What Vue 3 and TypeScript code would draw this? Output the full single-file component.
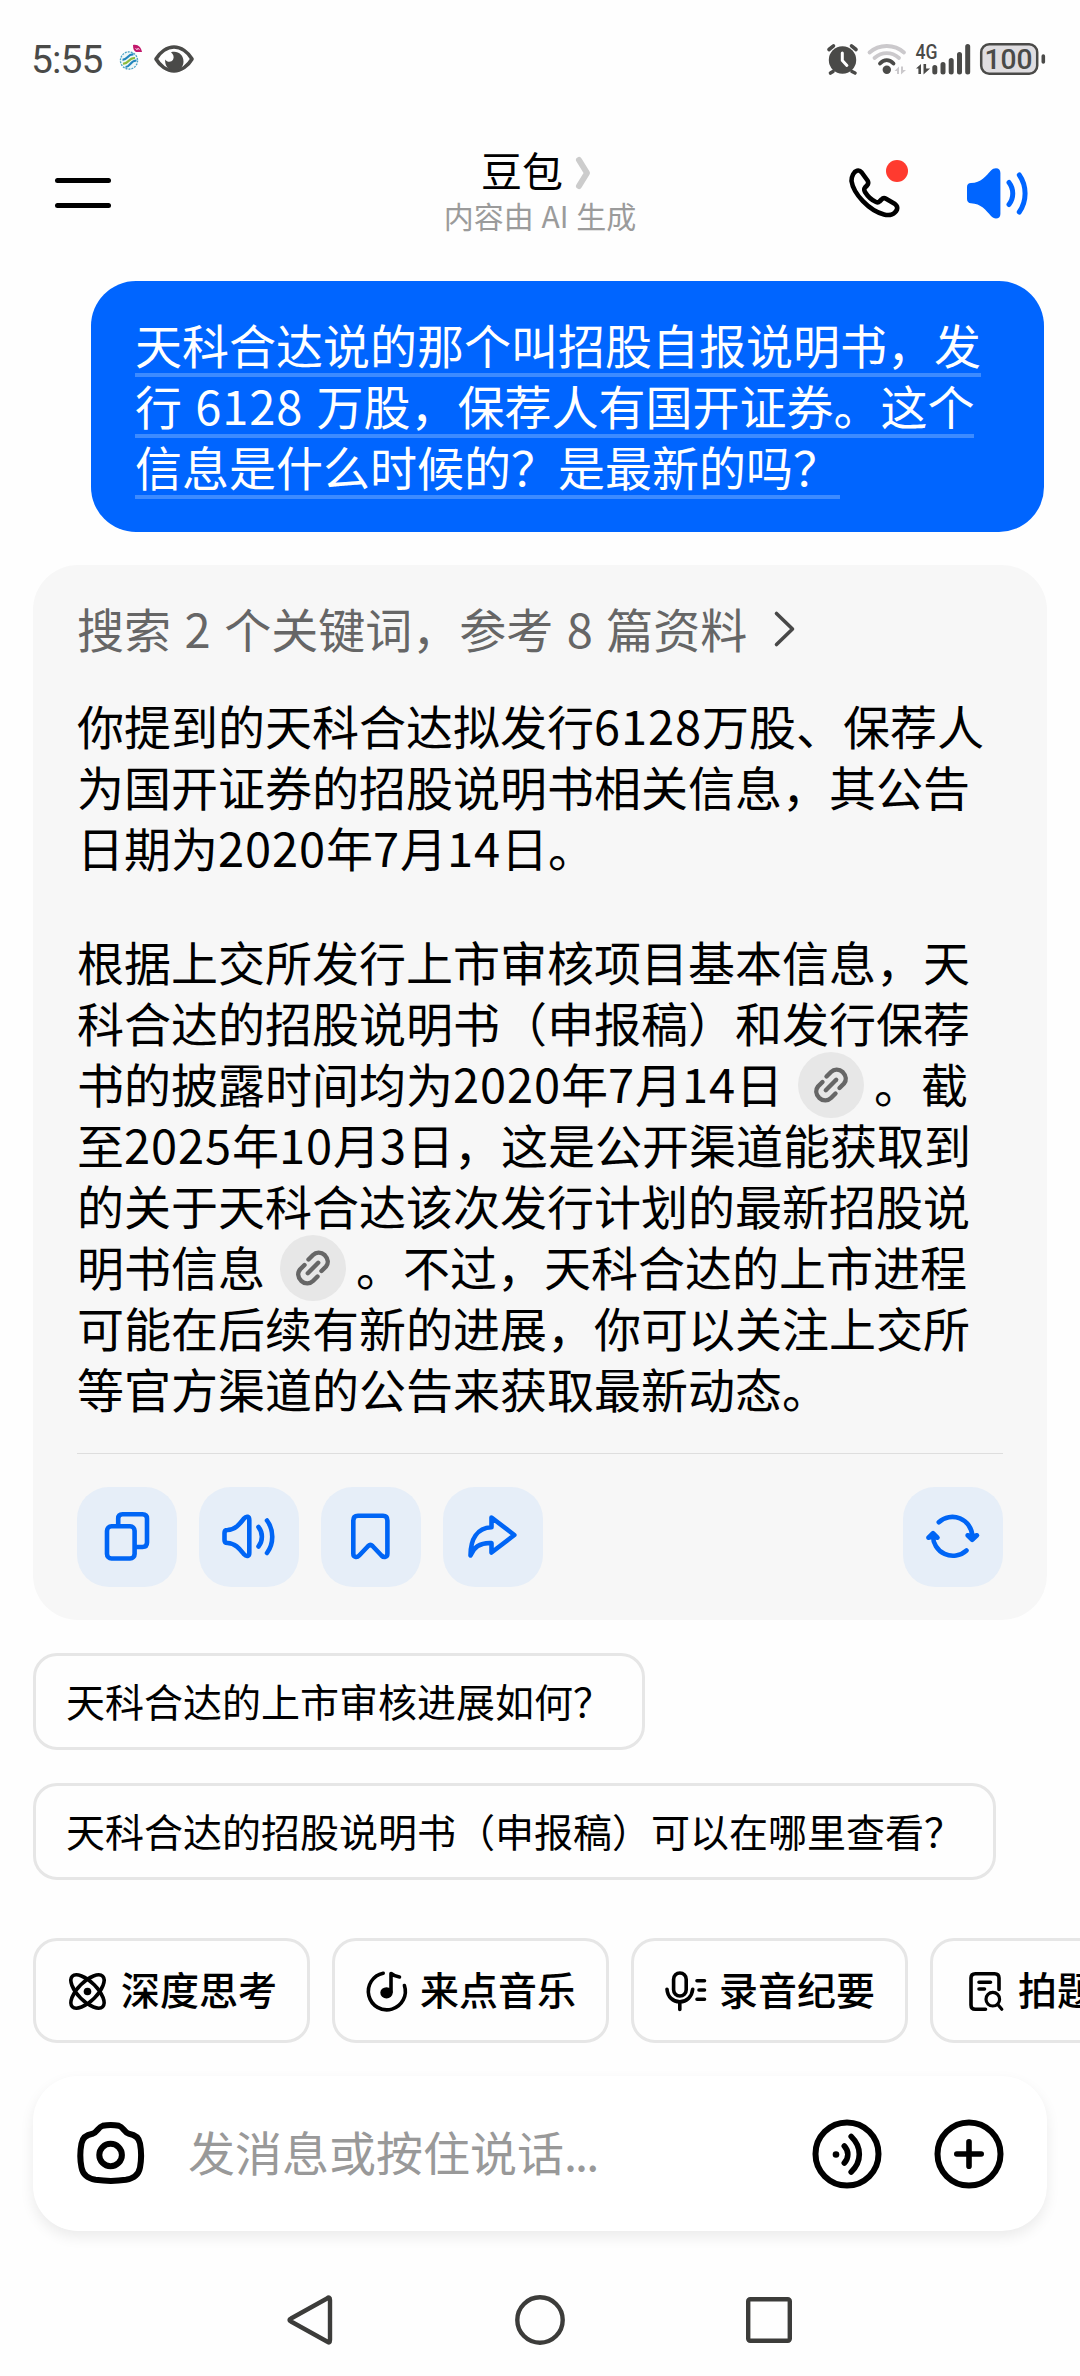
<script setup lang="ts">
interface Segment {
  text?: string
  link?: boolean
}

const question: string[] = [
  '天科合达说的那个叫招股自报说明书，发',
  '行 6128 万股，保荐人有国开证券。这个',
  '信息是什么时候的？是最新的吗？',
]

const paragraphs: Segment[][][] = [
  [
    [{ text: '你提到的天科合达拟发行6128万股、保荐人' }],
    [{ text: '为国开证券的招股说明书相关信息，其公告' }],
    [{ text: '日期为2020年7月14日。' }],
  ],
  [
    [{ text: '根据上交所发行上市审核项目基本信息，天' }],
    [{ text: '科合达的招股说明书（申报稿）和发行保荐' }],
    [{ text: '书的披露时间均为2020年7月14日' }, { link: true }, { text: '。截' }],
    [{ text: '至2025年10月3日，这是公开渠道能获取到' }],
    [{ text: '的关于天科合达该次发行计划的最新招股说' }],
    [{ text: '明书信息' }, { link: true }, { text: '。不过，天科合达的上市进程' }],
    [{ text: '可能在后续有新的进展，你可以关注上交所' }],
    [{ text: '等官方渠道的公告来获取最新动态。' }],
  ],
]

const suggestions: string[] = [
  '天科合达的上市审核进展如何？',
  '天科合达的招股说明书（申报稿）可以在哪里查看？',
]

const tools = [
  { id: 'think', label: '深度思考' },
  { id: 'music', label: '来点音乐' },
  { id: 'record', label: '录音纪要' },
  { id: 'photo', label: '拍题答疑' },
]

/* Splits a line into runs so that digits can carry their own tracking. */
function runs(text: string): string[] {
  return text.split(/(\d+)/).filter(Boolean)
}
function isNumber(run: string): boolean {
  return /^\d+$/.test(run)
}
</script>

<template>
  <div class="screen">
    <div class="status">
      <div class="status-side">
        <span class="time">5:55</span>
        <svg class="carrier" width="24" height="26" viewBox="0 0 24 26" fill="none">
          <circle cx="10" cy="16.500" r="8.600" fill="#eef7f8" stroke="#4aa3c4" stroke-width="1.300" stroke-dasharray="2 1" />
          <path d="M3.500 15.500c4.500 1 5.500-6 11-5M6.500 23c5 0 4.500-6.500 11-6.500" stroke="#2185bd" stroke-width="2.200" />
          <path d="M4 19.500c6 1 5-6 12-5.500" stroke="#8dbb3c" stroke-width="2.200" />
          <path d="M14 1c5-1 8 2 9 7h-6c-2-1-3-3-3-7z" fill="#c2186b" />
          <path d="M16.500 4l1.500 2 1-2 1.500 2" stroke="#f3b5d3" stroke-width="1" />
        </svg>
        <svg class="eye" width="40" height="28" viewBox="0 0 40 28">
          <path d="M2 14C6 7 13 2 20 2s14 5 18 12c-4 7-11 12-18 12S6 21 2 14z" fill="none" stroke="#4a4a48" stroke-width="3.600" stroke-linejoin="round" />
          <path d="M17 7.300c6.500-2 12.500 2.200 12.500 9.200 0 5.500-4 9-9.300 9-5.500 0-9.700-4.500-9-11 1.800 3 6.300 3 7.800.300 1.400-2.600.500-5.500-2-7.500z" fill="#4a4a48" />
        </svg>
      </div>
      <svg class="status-icons" width="220" height="34" viewBox="826 42 220 34">
        <g fill="#4a4a48" stroke-linecap="round">
          <circle cx="842.500" cy="60" r="13.700" />
          <path d="M829 49.500l4.500-3.700M856 49.500l-4.500-3.700M833 71.500l-2.500 1.500M852 71.500l3 1.500" stroke="#4a4a48" stroke-width="3.600" />
          <path d="M842.300 53v7.500l4.600 5" fill="none" stroke="#fff" stroke-width="3" />
        </g>
        <g fill="none" stroke-linecap="round" stroke-width="3.800">
          <path d="M869.500 52.500C879 43.800 894.500 43.800 904 52.500" stroke="#cbc9cc" />
          <path d="M874.500 58C882 51.500 891.500 51.500 899 58" stroke="#cbc9cc" />
          <path d="M880 63.500C884 59 889.500 59 893.500 63.500" stroke="#4a4a48" />
        </g>
        <circle cx="886.800" cy="69.800" r="4.200" fill="#4a4a48" />
        <path d="M894.500 71l4.500-4.500V74h-2v-3zM901 66.500h2v3.500h3l-5 4.500z" fill="#cbc9cc" />
        <text x="915.500" y="58.500" font-size="19.500" font-weight="500" fill="#4a4a48" textLength="22" lengthAdjust="spacingAndGlyphs">4G</text>
        <path d="M916 68.500l5-4.500v10h-2.600v-5.500zM923.500 64h2.600v4.500h4l-6.600 6z" fill="#4a4a48" />
        <path d="M934.800 67.500v4.500M943 64.500v7.500M951.200 60.500v11.500M959.500 54.500v17.500M967.700 46.500v25.500" stroke="#4a4a48" stroke-width="5" stroke-linecap="round" />
        <rect x="981.200" y="44.200" width="56" height="29.600" rx="8" fill="#dfdde0" stroke="#4a4a48" stroke-width="2.500" />
        <path d="M1043.300 56v6" stroke="#4a4a48" stroke-width="3.600" stroke-linecap="round" />
        <text x="984.500" y="69" font-size="28" font-weight="500" fill="#4a4a48" textLength="48" lengthAdjust="spacingAndGlyphs">100</text>
      </svg>
    </div>

    <header class="header">
      <div class="menu"><i></i><i></i></div>
      <div class="title-block">
        <div class="title">
          <span>豆包</span>
          <svg width="16" height="34" viewBox="0 0 16 34" fill="none">
            <path d="M4 4L12 17L4 30" stroke="#ccc" stroke-width="6" stroke-linecap="round" stroke-linejoin="round" />
          </svg>
        </div>
        <div class="subtitle">内容由 AI 生成</div>
      </div>
      <div class="header-actions">
        <div class="call">
          <svg width="52" height="50" viewBox="0 0 52 50" fill="none">
            <path d="M2.500 13C2.500 8 5 3.500 8 2.700C10 2 11.500 3 12.700 4.500L18.500 12.500C19.800 14.500 19.500 16 18 17.500L16 19.500C14.800 20.800 15 22 16 24C18.500 28 22.500 32 27 34C28.500 34.700 29.500 34.600 30.500 33.500L32.500 31.500C33.800 30 35.500 29.800 37 30.700L46 36C48 37.500 48.700 39 48 41.500C46 46 41 48 35 46.500C20 42.500 4.500 26 2.500 13Z" stroke="#000" stroke-width="4.600" stroke-linejoin="round" />
          </svg>
          <b class="dot"></b>
        </div>
        <svg width="64" height="53" viewBox="0 0 64 53" fill="none">
          <path d="M1 20C1 17.500 2.500 16 5 16C15 15.800 20 9 25 3.500C26.500 2 28 1.300 30 1.300C32.800 1.300 34.400 3 34.400 6V47C34.400 50 32.500 51.500 30 51.500C28 51.500 26.500 50.500 25 49C20 43.500 15 36.500 5 36.300C2.500 36.300 1 34.500 1 32Z" fill="#0065ff" />
          <path d="M43 15.500C48 22 48 31 43 37.500M53.300 8C61 19 61 34 53.300 45" stroke="#0065ff" stroke-width="5" stroke-linecap="round" />
        </svg>
      </div>
    </header>

    <main class="chat">
      <div class="bubble">
        <div v-for="line in question" :key="line" class="ask-line">
          <span class="ask-text"><span v-for="(run, r) in runs(line)" :key="r" :class="{ num: isNumber(run) }">{{ run }}</span></span>
        </div>
      </div>

      <section class="card">
        <div class="search">
          <span>搜索 2 个关键词，参考 8 篇资料</span>
          <svg width="22" height="36" viewBox="0 0 22 36" fill="none">
            <path d="M2.500 2.500L18.500 18L2.500 33.500" stroke="#484848" stroke-width="3.600" stroke-linecap="round" stroke-linejoin="round" />
          </svg>
        </div>

        <div v-for="(para, p) in paragraphs" :key="p" class="para">
          <div v-for="(line, l) in para" :key="l" class="line">
            <template v-for="(seg, s) in line" :key="s">
              <span v-if="seg.link" class="link">
                <svg width="66" height="66" viewBox="0 0 66 66" fill="none" stroke="#666" stroke-width="4.400" stroke-linecap="round">
                  <path d="M28.500 24.500L33 20C36 17 41 16.500 44.800 20.200C48.500 24 48.500 28.500 46 31.500L41.500 36" />
                  <path d="M37.500 41.500L33 46C30 49 25 49.500 21.200 45.800C17.500 42 17.500 37.500 20 34.500L24.500 30" />
                  <path d="M27.800 38.200L38.200 27.800" />
                </svg>
              </span>
              <template v-else>
                <span v-for="(run, r) in runs(seg.text ?? '')" :key="r" :class="{ num: isNumber(run) }">{{ run }}</span>
              </template>
            </template>
          </div>
        </div>

        <div class="divider"></div>

        <div class="actions">
          <div class="action">
            <svg viewBox="0 0 100 100">
              <rect x="30" y="39.300" width="27.600" height="32.200" rx="4.500" />
              <path d="M41.200 38V31.500Q41.200 27.200 45.500 27.200H65.500Q70 27.200 70 31.500V55.500Q70 60 65.500 60H59" />
            </svg>
          </div>
          <div class="action">
            <svg viewBox="0 0 100 100">
              <path d="M25.500 46Q25.500 43 28.500 43C37 42.500 41 36.500 45 31.500C47.500 28.500 50.300 29.500 50.300 33V66C50.300 69.300 47.500 70 45 67.300C41 62.500 37 56.500 28.500 56Q25.500 56 25.500 53Z" />
              <path d="M59.500 40C64 45.500 64 54 59.500 59.500M68 33.500C75 43 75 56.500 68 66" />
            </svg>
          </div>
          <div class="action">
            <svg viewBox="0 0 100 100">
              <path d="M32.300 33.500Q32.300 28.800 37 28.800H62Q66.400 28.800 66.400 33.500V66.500C66.400 70.300 63 71 60.500 68.500L51.500 59Q49.400 57 47.200 59L38.200 68.500C35.800 71 32.300 70.300 32.300 66.500Z" />
            </svg>
          </div>
          <div class="action">
            <svg viewBox="0 0 100 100">
              <path d="M48.500 30.500L71.300 48L48.500 65.500V56C39 55.500 31 59 27.500 68.500C27.500 52 34 41 48.500 40.300Z" />
            </svg>
          </div>
          <div class="action refresh">
            <svg viewBox="0 0 100 100">
              <path d="M35.800 35.200A20 20 0 0 1 69.300 49M30 48A20 20 0 0 0 63.500 63.500" />
              <path d="M64.600 48.300L69.200 52.800L74 48.300L69.200 49.500ZM25.400 50.700L30 46.200L34.500 50.700L30 49.500Z" fill="#0065f5" />
            </svg>
          </div>
        </div>
      </section>

      <div v-for="item in suggestions" :key="item" class="suggestion">{{ item }}</div>
    </main>

    <div class="tools">
      <div v-for="tool in tools" :key="tool.id" class="tool">
        <svg width="42" height="42" viewBox="0 0 42 42" fill="none" stroke="#000" stroke-width="3.600" stroke-linecap="round">
          <template v-if="tool.id === 'think'">
            <ellipse cx="20.500" cy="21.500" rx="21.500" ry="9.500" transform="rotate(45 20.500 21.500)" />
            <ellipse cx="20.500" cy="21.500" rx="21.500" ry="9.500" transform="rotate(-45 20.500 21.500)" />
            <circle cx="20.500" cy="21.500" r="3.800" fill="#000" stroke="none" />
          </template>
          <template v-else-if="tool.id === 'music'">
            <path d="M17.200 3.200A18.500 18.500 0 1 0 38.400 15.500" />
            <path d="M25 22V3.500Q28 6 33.500 7" stroke-linejoin="round" />
            <ellipse cx="20.500" cy="22.800" rx="6.200" ry="5.600" fill="#000" stroke="none" />
          </template>
          <template v-else-if="tool.id === 'record'">
            <rect x="8.600" y="3" width="12.600" height="23" rx="6.300" />
            <path d="M2 19.200C2.500 27 8 31.800 14.800 31.800S27 27 27.700 19.200M14.800 32.500V39.500M32 10.700H39.500M34 20H39.500M32 29.200H39.500" />
          </template>
          <template v-else>
            <path d="M35 19.500V8Q35 3.700 30.700 3.700H11.300Q7 3.700 7 8V35Q7 39.300 11.300 39.300H21.500M15 12.200H26.500M15 19H20.500" />
            <circle cx="28.800" cy="29.200" r="6.800" stroke-width="3.200" />
            <path d="M33.800 34.500L37.800 39.200" stroke-width="3.200" />
          </template>
        </svg>
        <span>{{ tool.label }}</span>
      </div>
    </div>

    <div class="input">
      <svg width="70" height="70" viewBox="0 0 70 70" fill="none" stroke="#000" stroke-width="6">
        <path d="M27.600 6.800C32 5.800 39.500 5.800 44 6.800C48.500 8 49 13.500 54 14.800C60.500 15.800 64 19 65 24.500C66.200 31 66.200 42 65 48.500C63.500 56.500 58.500 59.500 51 60.800C41 62.300 31 62.300 20.500 60.800C13 59.500 8 56.500 6.500 48.500C5.200 42 5.200 31 6.500 24.500C7.500 19 11 15.800 17.500 14.800C22.500 13.500 23 8 27.600 6.800Z" />
        <circle cx="35.600" cy="36" r="11.300" />
      </svg>
      <span class="placeholder">发消息或按住说话<span class="dots">...</span></span>
      <svg width="70" height="70" viewBox="0 0 70 70" fill="none" stroke="#000" stroke-linecap="round">
        <circle cx="35" cy="35" r="31.500" stroke-width="6" />
        <circle cx="24" cy="35.500" r="3.300" fill="#000" stroke="none" />
        <path d="M32.300 27C37 32 37 39 32.300 44M39.200 17.500C50 28 50 42.500 39.200 53" stroke-width="5.600" />
      </svg>
      <svg class="plus" width="70" height="70" viewBox="0 0 70 70" fill="none" stroke="#000" stroke-linecap="round">
        <circle cx="35" cy="35" r="31.500" stroke-width="6" />
        <path d="M22.800 35H47.200M35 22.800V47.200" stroke-width="5.600" />
      </svg>
    </div>

    <nav class="nav">
      <svg width="54" height="54" viewBox="0 0 54 54"><path d="M43 5.500Q46 3 46 7V47Q46 51 43 48.500L7 28.500Q4 27 7 25.500Z" /></svg>
      <svg width="54" height="54" viewBox="0 0 54 54"><circle cx="27" cy="27" r="22.700" /></svg>
      <svg width="54" height="54" viewBox="0 0 54 54"><rect x="6.200" y="6.200" width="41.600" height="41.600" rx="2" /></svg>
    </nav>
  </div>
</template>

<style>
body {
  margin: 0;
  background: #fefefe;
}
</style>

<style scoped>
.screen {
  width: 1080px;
  height: 2376px;
  display: flex;
  flex-direction: column;
  overflow: hidden;
  background: #fefefe;
  color: #000;
  font-family: "Noto Sans CJK SC", "Noto Sans", sans-serif;
  text-spacing-trim: space-all;
  white-space: nowrap;
}
svg {
  display: block;
  flex: none;
  overflow: visible;
}

.status {
  height: 118px;
  flex: none;
  display: flex;
  align-items: center;
  justify-content: space-between;
  padding: 0 34px 0 31px;
  font-family: Roboto, sans-serif;
}
.status-side {
  display: flex;
  align-items: center;
}
.time {
  width: 88px;
  font-size: 39px;
  line-height: 46px;
  letter-spacing: -0.900px;
  color: #4a4a48;
  padding-top: 2px;
}
.carrier {
  margin-bottom: 4px;
}
.eye {
  margin-left: 11px;
}

.header {
  height: 150px;
  flex: none;
  display: grid;
  grid-template-columns: 1fr auto 1fr;
  align-items: center;
  padding: 0 50px 0 55px;
}
.menu {
  width: 56px;
  display: flex;
  flex-direction: column;
  gap: 19.500px;
}
.menu i {
  height: 5.600px;
  border-radius: 3px;
  background: #000;
}
.title-block {
  padding: 0 5px 6px 0;
  display: flex;
  flex-direction: column;
  align-items: center;
}
.title {
  display: flex;
  align-items: center;
  gap: 12px;
  font-size: 41px;
  line-height: 50px;
  margin-right: 8px;
}
.title svg {
  margin-top: 8px;
}
.subtitle {
  font-size: 30px;
  line-height: 42px;
  word-spacing: 1px;
  color: #9b9b9b;
}
.header-actions {
  display: flex;
  align-items: center;
  justify-content: flex-end;
  gap: 65px;
}
.call {
  position: relative;
}
.dot {
  position: absolute;
  left: 37px;
  top: -8px;
  width: 22px;
  height: 22px;
  border-radius: 50%;
  background: #ff3a2f;
}

.chat {
  flex: none;
  display: flex;
  flex-direction: column;
  align-items: flex-start;
  padding: 13px 33px 0;
}
.bubble {
  align-self: flex-end;
  box-sizing: border-box;
  width: 953px;
  height: 251px;
  margin-right: 3px;
  padding: 35px 44px 0;
  border-radius: 45px;
  background: #0065ff;
  color: #fff;
  font-size: 47px;
  word-spacing: 2.700px;
}
.ask-line {
  height: 61px;
  display: flex;
}
.ask-text {
  height: 57px;
  line-height: 55px;
  border-bottom: 4px solid #3d8bff;
}

.card {
  box-sizing: border-box;
  width: 1014px;
  height: 1055px;
  margin-top: 33px;
  padding: 32px 44px 0;
  border-radius: 45px;
  background: #f7f7f7;
  font-size: 47px;
}
.search {
  height: 61px;
  display: flex;
  align-items: center;
  gap: 27px;
  line-height: 61px;
  word-spacing: 3px;
  color: #666;
}
.search svg {
  margin-top: 2px;
}
.para {
  margin-top: 36px;
}
.para + .para {
  margin-top: 53px;
}
.line {
  height: 61px;
  line-height: 61px;
  display: flex;
  align-items: center;
}
.num {
  letter-spacing: 0.900px;
}
.link {
  flex: none;
  width: 66px;
  height: 66px;
  margin: 4px 10px 0 15px;
  border-radius: 50%;
  background: #e7e7e7;
}
.divider {
  height: 1px;
  margin-top: 35px;
  background: #dedede;
}
.actions {
  display: flex;
  gap: 22px;
  margin-top: 33px;
}
.action {
  width: 100px;
  height: 100px;
  border-radius: 32px;
  background: #e6eef8;
}
.action svg {
  width: 100px;
  height: 100px;
  fill: none;
  stroke: #0065f5;
  stroke-width: 4.600;
  stroke-linecap: round;
  stroke-linejoin: round;
}
.refresh {
  margin-left: auto;
}

.suggestion {
  box-sizing: border-box;
  height: 97px;
  margin-top: 33px;
  padding: 0 30px;
  border: 3px solid #e6e6e6;
  border-radius: 24px;
  font-size: 39px;
  line-height: 88px;
}

.tools {
  flex: none;
  display: flex;
  gap: 22px;
  margin: 58px 0 0 33px;
}
.tool {
  flex: none;
  box-sizing: border-box;
  width: 277px;
  height: 105px;
  display: flex;
  align-items: center;
  gap: 12px;
  padding: 0 30px 0 31px;
  border: 3px solid #e6e6e6;
  border-radius: 24px;
  font-size: 39px;
  font-weight: 500;
  line-height: 94px;
}
.tool span {
  height: 99px;
}

.input {
  flex: none;
  box-sizing: border-box;
  width: 1014px;
  height: 155px;
  margin: 33px 0 0 33px;
  padding: 0 43px 0 42px;
  display: flex;
  align-items: center;
  border-radius: 45px;
  background: #fff;
  box-shadow: 0 6px 14px rgba(0, 0, 0, 0.080);
}
.placeholder {
  flex: 1;
  margin: -7px 0 0 43px;
  font-size: 47px;
  color: #999;
}
.dots {
  letter-spacing: -2px;
}
.plus {
  margin-left: 52px;
}

.nav {
  flex: none;
  display: flex;
  gap: 175px;
  margin: 62px 0 0 284px;
}
.nav svg {
  fill: none;
  stroke: #3c3c3a;
  stroke-width: 4.400;
  stroke-linejoin: round;
}
</style>
